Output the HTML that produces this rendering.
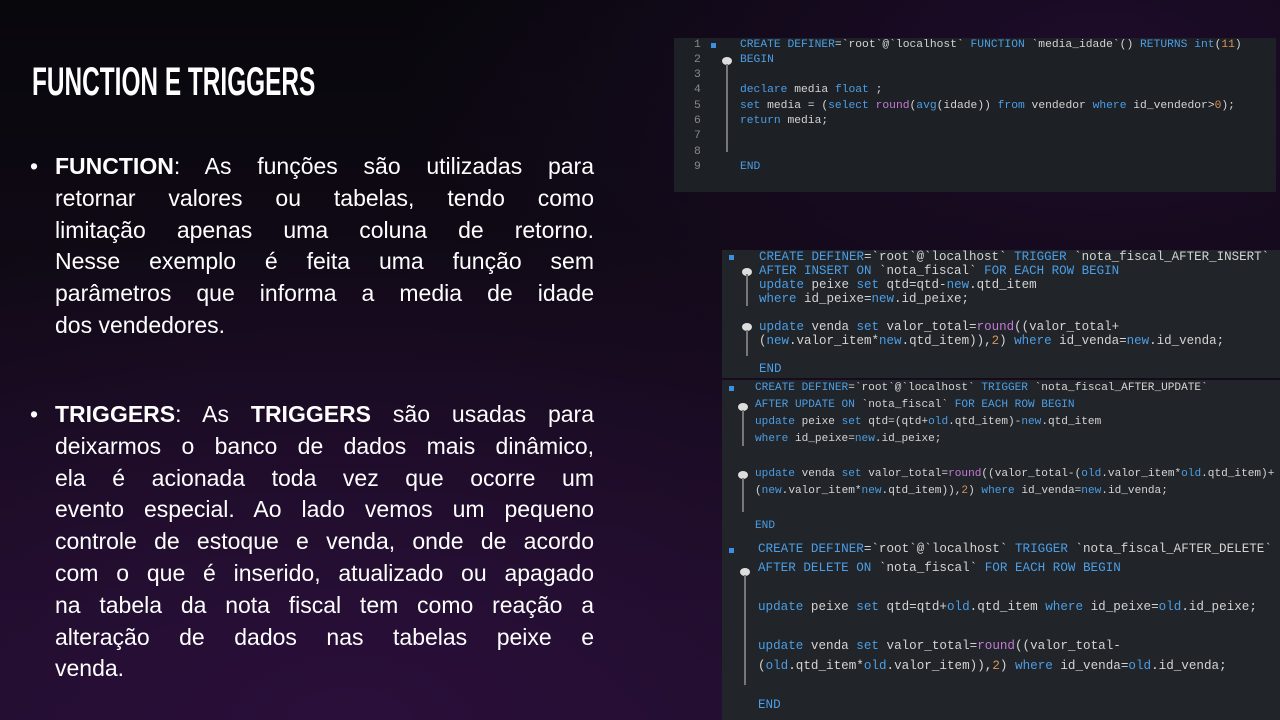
<!DOCTYPE html>
<html><head><meta charset="utf-8"><style>
*{margin:0;padding:0;box-sizing:border-box}
body{width:1280px;height:720px;overflow:hidden;position:relative;font-family:"Liberation Sans",sans-serif;
background:radial-gradient(ellipse 900px 500px at 350px 720px,#2a0f3a 0%,rgba(30,10,40,0) 100%),radial-gradient(ellipse 700px 400px at 1100px 60px,#1e0c2a 0%,rgba(0,0,0,0) 100%),linear-gradient(180deg,#08070c 0%,#120a18 50%,#1c0c26 100%);}
.title{position:absolute;left:32px;top:60px;font-weight:bold;font-size:40px;color:#fff;transform:scaleX(0.61);transform-origin:left top;letter-spacing:0px;line-height:44px}
.txt{position:absolute;left:30px;width:564px;color:#fff;font-size:23px;line-height:31.8px}
.txt .b{position:absolute;left:0;}
.txt p{margin-left:25px}
.txt p span.l{display:block;text-align:justify;text-align-last:justify;white-space:nowrap}
.txt p span.e{display:block;text-align:left;white-space:nowrap}
.box{position:absolute;background:#212428;font-family:"Liberation Mono",monospace;color:#d4d4d4;white-space:pre}
.box div{position:absolute}
.k{color:#4c9ee6}.r{color:#c47ad6}.n{color:#d8945a}.ln{color:#8a8a8a}
.fold{position:absolute;width:2px;background:#777}
.dot{position:absolute;width:10px;height:8px;border-radius:50%;background:#ddd}
.sq{position:absolute;width:5px;height:5px;background:#3b8fe0}
</style></head><body>
<div class="title">FUNCTION E TRIGGERS</div>
<div class="txt" style="top:151px"><span class="b">•</span><p>
<span class="l"><b>FUNCTION</b>: As funções são utilizadas para</span>
<span class="l">retornar valores ou tabelas, tendo como</span>
<span class="l">limitação apenas uma coluna de retorno.</span>
<span class="l">Nesse exemplo é feita uma função sem</span>
<span class="l">parâmetros que informa a media de idade</span>
<span class="e">dos vendedores.</span></p></div>
<div class="txt" style="top:399px"><span class="b">•</span><p>
<span class="l"><b>TRIGGERS</b>: As <b>TRIGGERS</b> são usadas para</span>
<span class="l">deixarmos o banco de dados mais dinâmico,</span>
<span class="l">ela é acionada toda vez que ocorre um</span>
<span class="l">evento especial. Ao lado vemos um pequeno</span>
<span class="l">controle de estoque e venda, onde de acordo</span>
<span class="l">com o que é inserido, atualizado ou apagado</span>
<span class="l">na tabela da nota fiscal tem como reação a</span>
<span class="l">alteração de dados nas tabelas peixe e</span>
<span class="e">venda.</span></p></div>

<div class="box" style="left:674px;top:38px;width:602px;height:154px;font-size:11.3px;background:#1d2024">
<div class="ln" style="left:20px;top:1px">1</div><div class="sq" style="left:37px;top:5px"></div>
<div class="ln" style="left:20px;top:16px">2</div><div class="ln" style="left:20px;top:31px">3</div><div class="ln" style="left:20px;top:46px">4</div><div class="ln" style="left:20px;top:62px">5</div><div class="ln" style="left:20px;top:77px">6</div><div class="ln" style="left:20px;top:92px">7</div><div class="ln" style="left:20px;top:108px">8</div><div class="ln" style="left:20px;top:123px">9</div>
<div class="dot" style="left:48px;top:19px"></div><div class="fold" style="left:52px;top:26px;height:88px"></div>
<div style="left:66px;top:1px"><span class="k">CREATE DEFINER</span>=`root`@`localhost` <span class="k">FUNCTION</span> `media_idade`() <span class="k">RETURNS int</span>(<span class="n">11</span>)</div>
<div class="k" style="left:66px;top:16px">BEGIN</div>
<div style="left:66px;top:46px"><span class="k">declare</span> media <span class="k">float</span> ;</div>
<div style="left:66px;top:62px"><span class="k">set</span> media = (<span class="k">select</span> <span class="r">round</span>(<span class="k">avg</span>(idade)) <span class="k">from</span> vendedor <span class="k">where</span> id_vendedor&gt;<span class="n">0</span>);</div>
<div style="left:66px;top:77px"><span class="k">return</span> media;</div>
<div class="k" style="left:66px;top:123px">END</div>
</div>

<div class="box" style="left:722px;top:250px;width:558px;height:128px;font-size:12.5px">
<div class="sq" style="left:7px;top:5px"></div>
<div class="dot" style="left:20px;top:18px"></div><div class="fold" style="left:24px;top:24px;height:32px"></div>
<div class="dot" style="left:20px;top:73px"></div><div class="fold" style="left:24px;top:80px;height:26px"></div>
<div style="left:37px;top:0px"><span class="k">CREATE DEFINER</span>=`root`@`localhost` <span class="k">TRIGGER</span> `nota_fiscal_AFTER_INSERT`</div>
<div style="left:37px;top:14px"><span class="k">AFTER INSERT ON</span> `nota_fiscal` <span class="k">FOR EACH ROW BEGIN</span></div>
<div style="left:37px;top:28px"><span class="k">update</span> peixe <span class="k">set</span> qtd=qtd-<span class="k">new</span>.qtd_item</div>
<div style="left:37px;top:42px"><span class="k">where</span> id_peixe=<span class="k">new</span>.id_peixe;</div>
<div style="left:37px;top:70px"><span class="k">update</span> venda <span class="k">set</span> valor_total=<span class="r">round</span>((valor_total+</div>
<div style="left:37px;top:84px">(<span class="k">new</span>.valor_item*<span class="k">new</span>.qtd_item)),<span class="n">2</span>) <span class="k">where</span> id_venda=<span class="k">new</span>.id_venda;</div>
<div class="k" style="left:37px;top:112px">END</div>
</div>

<div class="box" style="left:722px;top:380px;width:558px;height:161px;font-size:11.1px">
<div class="sq" style="left:7px;top:6px"></div>
<div class="dot" style="left:16px;top:23px"></div><div class="fold" style="left:20px;top:30px;height:36px"></div>
<div class="dot" style="left:16px;top:91px"></div><div class="fold" style="left:20px;top:98px;height:34px"></div>
<div style="left:33px;top:2px"><span class="k">CREATE DEFINER</span>=`root`@`localhost` <span class="k">TRIGGER</span> `nota_fiscal_AFTER_UPDATE`</div>
<div style="left:33px;top:19px"><span class="k">AFTER UPDATE ON</span> `nota_fiscal` <span class="k">FOR EACH ROW BEGIN</span></div>
<div style="left:33px;top:36px"><span class="k">update</span> peixe <span class="k">set</span> qtd=(qtd+<span class="k">old</span>.qtd_item)-<span class="k">new</span>.qtd_item</div>
<div style="left:33px;top:53px"><span class="k">where</span> id_peixe=<span class="k">new</span>.id_peixe;</div>
<div style="left:33px;top:88px"><span class="k">update</span> venda <span class="k">set</span> valor_total=<span class="r">round</span>((valor_total-(<span class="k">old</span>.valor_item*<span class="k">old</span>.qtd_item)+</div>
<div style="left:33px;top:105px">(<span class="k">new</span>.valor_item*<span class="k">new</span>.qtd_item)),<span class="n">2</span>) <span class="k">where</span> id_venda=<span class="k">new</span>.id_venda;</div>
<div class="k" style="left:33px;top:140px">END</div>
</div>

<div class="box" style="left:722px;top:541px;width:558px;height:179px;font-size:12.6px">
<div class="sq" style="left:7px;top:7px"></div>
<div class="dot" style="left:18px;top:27px"></div><div class="fold" style="left:22px;top:34px;height:110px"></div>
<div style="left:36px;top:1px"><span class="k">CREATE DEFINER</span>=`root`@`localhost` <span class="k">TRIGGER</span> `nota_fiscal_AFTER_DELETE`</div>
<div style="left:36px;top:20px"><span class="k">AFTER DELETE ON</span> `nota_fiscal` <span class="k">FOR EACH ROW BEGIN</span></div>
<div style="left:36px;top:59px"><span class="k">update</span> peixe <span class="k">set</span> qtd=qtd+<span class="k">old</span>.qtd_item <span class="k">where</span> id_peixe=<span class="k">old</span>.id_peixe;</div>
<div style="left:36px;top:98px"><span class="k">update</span> venda <span class="k">set</span> valor_total=<span class="r">round</span>((valor_total-</div>
<div style="left:36px;top:118px">(<span class="k">old</span>.qtd_item*<span class="k">old</span>.valor_item)),<span class="n">2</span>) <span class="k">where</span> id_venda=<span class="k">old</span>.id_venda;</div>
<div class="k" style="left:36px;top:157px">END</div>
</div>
</body></html>
